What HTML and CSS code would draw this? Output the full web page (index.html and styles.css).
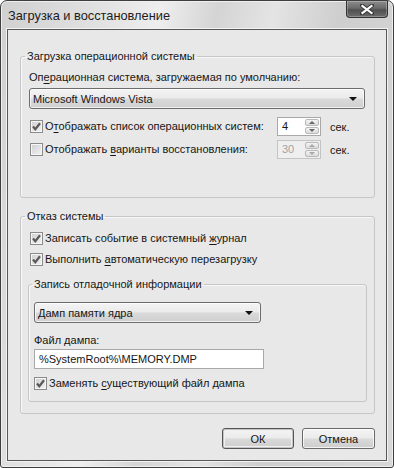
FILE: index.html
```html
<!DOCTYPE html>
<html>
<head>
    <meta charset="utf-8">
    <title>Загрузка и восстановление</title>
    <link rel="stylesheet" href="styles.css">
</head>
<body>
    <div class="window">
        <div class="titlebar">
            <span class="title">Загрузка и восстановление</span>
            <div class="close">
                <svg width="14" height="11" viewBox="0 0 14 11">
                    <path d="M2 1.5 L12 9.5 M12 1.5 L2 9.5" stroke="#3a3a3a" stroke-width="4" stroke-linecap="square"/>
                    <path d="M2.5 2 L11.5 9 M11.5 2 L2.5 9" stroke="#fff" stroke-width="2.2" stroke-linecap="square"/>
                </svg>
            </div>
        </div>

        <div class="client">
            <fieldset class="group group-boot">
                <legend>Загрузка операционной системы</legend>
                <div class="text">Оп<u>е</u>рационная система, загружаемая по умолчанию:</div>
                <div class="combo combo-os">
                    <span>Microsoft Windows Vista</span>
                    <i class="arrow"></i>
                </div>

                <div class="spin-row spin-row-first">
                    <label class="check">
                        <span class="box"><svg width="11" height="11" viewBox="0 0 11 11"><path d="M2 5.5 L4.3 8.2 L9 2.3" fill="none" stroke="#5a5a5a" stroke-width="2.2"/></svg></span>
                        <span>О<u>т</u>ображать список операционных систем:</span>
                    </label>
                    <div class="spin">
                        <span class="spin-val">4</span>
                        <span class="spin-btns"><b class="up"></b><b class="down"></b></span>
                    </div>
                    <span class="unit">сек.</span>
                </div>

                <div class="spin-row">
                    <label class="check">
                        <span class="box"></span>
                        <span>Отображать <u>в</u>арианты восстановления:</span>
                    </label>
                    <div class="spin disabled">
                        <span class="spin-val">30</span>
                        <span class="spin-btns"><b class="up"></b><b class="down"></b></span>
                    </div>
                    <span class="unit">сек.</span>
                </div>
            </fieldset>

            <fieldset class="group group-fail">
                <legend>Отказ системы</legend>
                <label class="check">
                    <span class="box"><svg width="11" height="11" viewBox="0 0 11 11"><path d="M2 5.5 L4.3 8.2 L9 2.3" fill="none" stroke="#5a5a5a" stroke-width="2.2"/></svg></span>
                    <span>Записать событие в системный <u>ж</u>урнал</span>
                </label>
                <label class="check check-next">
                    <span class="box"><svg width="11" height="11" viewBox="0 0 11 11"><path d="M2 5.5 L4.3 8.2 L9 2.3" fill="none" stroke="#5a5a5a" stroke-width="2.2"/></svg></span>
                    <span>Выполнить <u>а</u>втоматическую перезагрузку</span>
                </label>

                <fieldset class="group group-debug">
                    <legend>Запись отладочной информации</legend>
                    <div class="combo combo-dump">
                        <span>Дамп памяти ядра</span>
                        <i class="arrow"></i>
                    </div>
                    <div class="text text-file">Файл дампа:</div>
                    <div class="field">%SystemRoot%\MEMORY.DMP</div>
                    <label class="check check-replace">
                        <span class="box"><svg width="11" height="11" viewBox="0 0 11 11"><path d="M2 5.5 L4.3 8.2 L9 2.3" fill="none" stroke="#5a5a5a" stroke-width="2.2"/></svg></span>
                        <span>Заменять <u>с</u>уществующий файл дампа</span>
                    </label>
                </fieldset>
            </fieldset>

            <div class="buttons">
                <button class="btn btn-default">ОК</button>
                <button class="btn">Отмена</button>
            </div>
        </div>
    </div>
</body>
</html>
```

FILE: styles.css
```css
* { box-sizing: border-box; }
body { margin: 0; background: #fff; font-family: "Liberation Sans", Arial, sans-serif; font-size: 11px; color: #161616; }
u { text-decoration-thickness: 1px; text-underline-offset: 2px; }

/* window frame */
.window { width: 394px; height: 468px; display: flex; flex-direction: column; padding: 0 6px 7px; border: 1px solid #3e3e3e; border-radius: 7px 7px 3px 3px; box-shadow: inset 0 0 0 1px #efefef; background: linear-gradient(100deg, #d0d0d0 0%, #e2e2e2 22%, #eeeeee 34%, #d4d4d4 46%, #e4e4e4 58%, #cecece 72%, #d8d8d8 100%); }
.titlebar { height: 28px; flex: none; display: flex; justify-content: space-between; align-items: flex-start; }
.title { padding: 7px 0 0 1px; line-height: 15px; font-size: 12.8px; color: #1c1c1c; }
.close { width: 42px; height: 17px; margin-right: -1px; display: flex; align-items: center; justify-content: center; border: 1px solid #333; border-top: none; border-radius: 0 0 4px 4px; background: linear-gradient(#8c8c8c, #6a6a6a 45%, #505050 55%, #6c6c6c); box-shadow: inset 0 0 0 1px rgba(255,255,255,0.25); }

.client { flex: 1; display: flex; flex-direction: column; padding: 19px 11px 11px 12px; border: 1px solid #575757; box-shadow: 0 0 0 1px #f3f3f3; background: #e8e8e8; }

/* group boxes */
.group { margin: 0; min-width: 0; border: 1px solid #c6c6c6; border-radius: 3px; box-shadow: inset 1px 1px 0 #f8f8f8; }
.group legend { padding: 0 2px; line-height: 15px; }
.group-boot { padding: 6px 9px 38px 8px; }
.group-boot legend { margin-left: -4px; }
.group-fail { margin-top: 11px; padding: 7px 7px 11px; }
.group-fail legend { margin-left: -3px; }
.group-debug { margin-top: 10px; padding: 10px 5px 10px; }
.group-debug legend { margin-left: -2px; }

.text { line-height: 15px; }
.text-file { margin-top: 10px; }

/* combo boxes */
.combo { height: 21px; display: flex; align-items: center; justify-content: space-between; padding: 0 7px 0 3px; border: 1px solid #6c6c6c; border-radius: 3px; background: linear-gradient(#f4f4f4, #ebebeb 48%, #dadada 52%, #cfcfcf); box-shadow: inset 0 0 0 1px rgba(255,255,255,0.7); }
.combo-os { margin-top: 3px; }
.combo-dump { width: 227px; }
.arrow { width: 0; height: 0; border-left: 4px solid transparent; border-right: 4px solid transparent; border-top: 4px solid #111; }

/* checkboxes */
.check { display: flex; align-items: center; line-height: 15px; margin-left: 1px; }
.box { width: 13px; height: 13px; flex: none; margin-right: 2px; display: flex; align-items: center; justify-content: center; border: 1px solid #8b8b8b; background: linear-gradient(135deg, #cfcfcf, #f2f2f2); box-shadow: inset 0 0 0 1px #f6f6f6; }
.group-fail > .check { margin-left: 2px; }
.check-next { margin-top: 6px; }
.check-replace { margin-top: 7px; margin-left: 0; }

/* spinners */
.spin-row { display: grid; grid-template-columns: 248px 44px auto; align-items: center; margin-top: 4px; }
.spin-row-first { margin-top: 8px; }
.spin { height: 19px; display: flex; justify-content: space-between; padding: 1px 1px 1px 4px; border: 1px solid #a9a9a9; background: #fff; }
.spin-val { line-height: 15px; }
.spin-btns { width: 14px; display: flex; flex-direction: column; gap: 1px; }
.spin-btns b { flex: 1; display: flex; align-items: center; justify-content: center; border: 1px solid #b9b9b9; border-radius: 2px; background: linear-gradient(#f4f4f4, #dcdcdc); }
.spin-btns .up::after { content: ""; border-left: 3px solid transparent; border-right: 3px solid transparent; border-bottom: 3px solid #666; }
.spin-btns .down::after { content: ""; border-left: 3px solid transparent; border-right: 3px solid transparent; border-top: 3px solid #666; }
.spin.disabled { background: #efefef; border-color: #c4c4c4; color: #a3a3a3; }
.spin.disabled .spin-btns .up::after { border-bottom-color: #a8a8a8; }
.spin.disabled .spin-btns .down::after { border-top-color: #a8a8a8; }
.unit { margin-left: 9px; }

/* text field */
.field { width: 230px; height: 20px; margin-top: 1px; padding: 0 4px; line-height: 18px; border: 1px solid #a9a9a9; background: #fff; }

/* buttons */
.buttons { margin-top: 14px; display: flex; justify-content: flex-end; gap: 8px; }
.btn { width: 73px; height: 21px; padding: 0; font: inherit; color: #161616; border: 1px solid #6a6a6a; border-radius: 3px; background: linear-gradient(#f4f4f4, #ebebeb 48%, #dadada 52%, #cdcdcd); box-shadow: inset 0 0 0 1px rgba(255,255,255,0.75); }
.btn-default { width: 72px; border-color: #555; box-shadow: inset 0 0 0 1px #c4c4c4, inset 0 0 0 2px #f0f0f0; }
```
